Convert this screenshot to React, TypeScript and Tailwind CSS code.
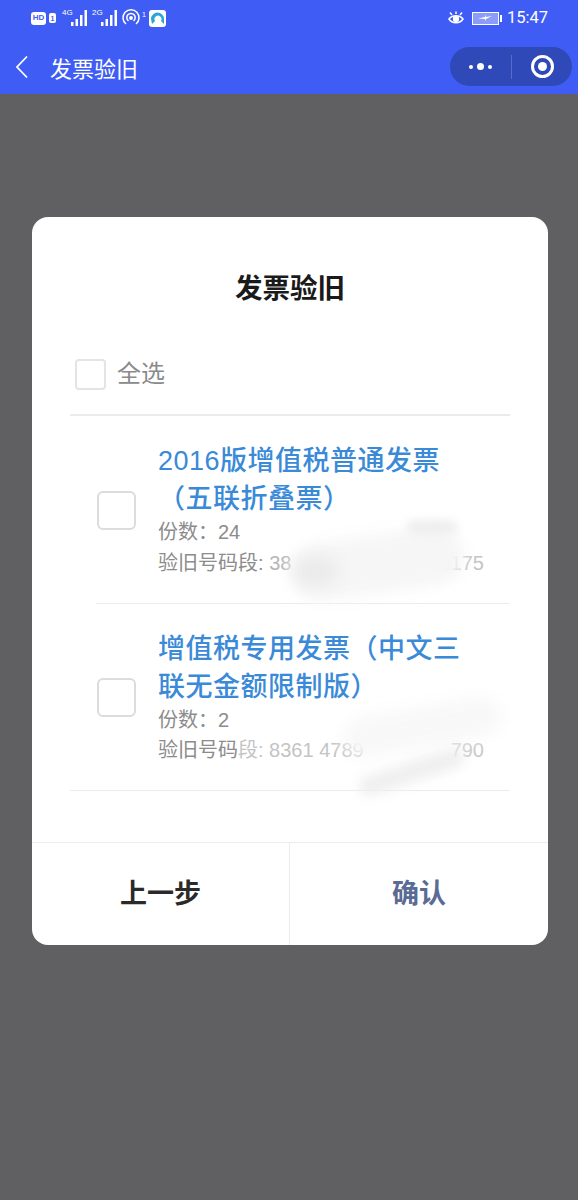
const cjk = { fontFamily: '"Liberation Sans", "Noto Sans CJK SC", sans-serif' };

function Bars() {
  return (
    <svg width="22" height="18" viewBox="0 0 22 18" fill="#fff" className="block">
      <rect x="4" y="13" width="2.5" height="4" />
      <rect x="8.5" y="10" width="2.5" height="7" />
      <rect x="13" y="6" width="2.5" height="11" />
      <rect x="17.5" y="1" width="2.5" height="16" />
    </svg>
  );
}

function StatusBar() {
  return (
    <div className="flex h-9 items-center justify-between pr-[30px] pl-[31px]">
      <div className="flex items-center">
        <span className="flex h-[13px] w-[15px] items-center justify-center rounded-[3px] bg-white text-[8px] leading-none font-bold text-[#3f5df5]">HD</span>
        <span className="ml-[3px] flex h-[10px] w-[7px] items-center justify-center rounded-[2px] bg-white text-[7px] leading-none font-bold text-[#3f5df5]">1</span>
        <div className="relative ml-[6px] h-[18px] w-[26px]">
          <span className="absolute top-[-1px] left-0 text-[8px] leading-[10px] text-white">4G</span>
          <div className="absolute top-0 left-[5px]"><Bars /></div>
        </div>
        <div className="relative ml-[4px] h-[18px] w-[26px]">
          <span className="absolute top-[-1px] left-0 text-[8px] leading-[10px] text-white">2G</span>
          <div className="absolute top-0 left-[5px]"><Bars /></div>
        </div>
        <svg width="20" height="18" viewBox="0 0 20 18" fill="none" stroke="#fff" strokeWidth="1.5" className="ml-[3px] block">
          <path d="M5 15 A8 8 0 1 1 15 15" />
          <path d="M7.5 12 A4.2 4.2 0 1 1 12.5 12" />
          <circle cx="10" cy="9" r="1.2" fill="#fff" />
        </svg>
        <span className="mb-[8px] ml-[1px] text-[7px] leading-none text-white">1</span>
        <svg width="17" height="17" viewBox="0 0 17 17" className="ml-[3px] block">
          <rect width="17" height="17" rx="3" fill="#fff" />
          <path d="M2 9 A6.5 6.5 0 0 1 15 9 L15 14 L12 11 A3.5 3.5 0 1 0 6 11 L3 14 Z" fill="#2aa5d8" />
        </svg>
      </div>
      <div className="flex items-center">
        <svg width="18" height="15" viewBox="0 0 18 15" fill="none" stroke="#fff" strokeWidth="1.5" className="block">
          <path d="M2 8 C5 3.5 13 3.5 16 8 C13 13 5 13 2 8 Z" />
          <circle cx="9" cy="8" r="2.4" fill="#fff" />
          <path d="M3 1.5 L5 4 M9 0.5 V3 M15 1.5 L13 4" />
        </svg>
        <div className="ml-[7px] flex h-[13px] w-[27px] items-center justify-center border border-white bg-white/40">
          <svg width="16" height="8" viewBox="0 0 16 8" fill="#fff" className="block"><path d="M1 4.5 L8 3 L9 0.5 L9 3 L15 2 L9 5 L8 7.5 L8 5 Z" /></svg>
        </div>
        <span className="ml-[1px] h-[7px] w-[2px] bg-white" />
        <span className="ml-[5px] text-[16.5px] leading-none text-white" style={{ fontFamily: 'Roboto, sans-serif' }}>15:47</span>
      </div>
    </div>
  );
}

function NavBar() {
  return (
    <div className="flex h-[58px] items-center justify-between pt-[3px] pr-[6px] pl-[15px]">
      <div className="flex items-center">
        <svg width="13" height="24" viewBox="0 0 13 24" fill="none" stroke="#fff" strokeWidth="1.8" className="block">
          <path d="M12 1.5 L2 12 L12 22.5" />
        </svg>
        <span className="mt-[7px] ml-[22px] text-[22px] leading-none text-white">发票验旧</span>
      </div>
      <div className="flex h-[39px] w-[122px] items-center rounded-full bg-[#3049b8]">
        <div className="flex w-[61px] items-center justify-center gap-[4px]">
          <span className="size-[4px] rounded-full bg-white" />
          <span className="size-[7px] rounded-full bg-white" />
          <span className="size-[4px] rounded-full bg-white" />
        </div>
        <span className="h-[24px] w-px bg-white/20" />
        <div className="flex flex-1 items-center justify-center">
          <span className="flex size-[23px] items-center justify-center rounded-full border-[3px] border-white">
            <span className="size-[9px] rounded-full bg-white" />
          </span>
        </div>
      </div>
    </div>
  );
}

function Box({ small }: { small?: boolean }) {
  return (
    <span className={small
      ? 'block size-[31px] shrink-0 rounded-[4px] border-2 border-[#e4e4e4] bg-white'
      : 'block size-[39px] shrink-0 rounded-[6px] border-2 border-[#dcdcdc] bg-white'} />
  );
}

export default function App() {
  return (
    <div className="flex min-h-[1200px] w-[578px] flex-col overflow-hidden bg-[#606062]" style={cjk}>
      <div className="bg-[#3f5df5]">
        <StatusBar />
        <NavBar />
      </div>
      <div className="pt-[123px] pr-[30px] pl-[32px]">
        <div className="relative flex h-[728px] flex-col overflow-hidden rounded-[16px] bg-white">
          <div className="pt-[53px] text-center text-[27.5px] leading-[38px] font-bold text-[#1a1a1a]">发票验旧</div>
          <div className="mt-[49px] flex items-center pl-[43px]">
            <Box small />
            <span className="ml-[11px] text-[24px] leading-[34px] text-[#8a8a8a]">全选</span>
          </div>
          <div className="mt-[23px] mr-[38px] ml-[38px] h-[2px] bg-[#ebebeb]" />
          <div className="flex h-[187px] items-center pt-[2px]">
            <div className="ml-[65px]"><Box /></div>
            <div className="ml-[22px] min-w-0">
              <div className="text-[27px] leading-[38px] font-medium tracking-[0.5px] text-[#3a8ad8]">2016版增值税普通发票</div>
              <div className="text-[27px] leading-[38px] font-medium tracking-[0.5px] text-[#3a8ad8]">（五联折叠票）</div>
              <div className="mt-[-1px] text-[20px] leading-[31px] text-[#8c8c8c]">份数：24</div>
              <div className="flex w-[326px] justify-between text-[20px] leading-[31px] text-[#8c8c8c]"><span>验旧号码段: <span className="text-[#b5b5b5]">38</span></span><span className="text-[#c4c4c4]">8175</span></div>
            </div>
          </div>
          <div className="mr-[38px] ml-[64px] h-px bg-[#ececec]" />
          <div className="flex h-[186px] items-center">
            <div className="ml-[65px]"><Box /></div>
            <div className="ml-[22px] min-w-0">
              <div className="text-[27px] leading-[38px] font-medium tracking-[0.5px] text-[#3a8ad8]">增值税专用发票（中文三</div>
              <div className="text-[27px] leading-[38px] font-medium tracking-[0.5px] text-[#3a8ad8]">联无金额限制版）</div>
              <div className="mt-[-1px] text-[20px] leading-[30px] text-[#8c8c8c]">份数：2</div>
              <div className="flex w-[326px] justify-between text-[20px] leading-[30px] text-[#8c8c8c]"><span>验旧号码<span className="text-[#c4c4c4]">段: 8361 4789</span></span><span className="text-[#c8c8c8]">790</span></div>
            </div>
          </div>
          <div className="mr-[38px] ml-[38px] h-px bg-[#ececec]" />
          <div className="mt-auto flex h-[103px] border-t border-[#ececec]">
            <div className="flex w-[258px] items-center justify-center border-r border-[#ececec] text-[27px] font-bold text-[#2a2a2a]">上一步</div>
            <div className="flex flex-1 items-center justify-center text-[27px] font-bold text-[#5a6b95]">确认</div>
          </div>
          <div className="absolute top-[318px] left-[258px] h-[58px] w-[175px] -rotate-[8deg] rounded-full bg-[#f6f6f6] blur-[7px]" />
          <div className="absolute top-[340px] left-[262px] h-[28px] w-[44px] rounded-full bg-[#eaeaea] blur-[8px]" />
          <div className="absolute top-[304px] left-[375px] h-[12px] w-[50px] rounded-full bg-[#ececec] blur-[5px]" />
          <div className="absolute top-[490px] left-[310px] h-[40px] w-[160px] -rotate-[10deg] rounded-full bg-[#f8f8f8] blur-[8px]" />
          <div className="absolute top-[545px] left-[325px] h-[20px] w-[110px] -rotate-[18deg] rounded-full bg-[#efefef] blur-[6px]" />
        </div>
      </div>
    </div>
  );
}
